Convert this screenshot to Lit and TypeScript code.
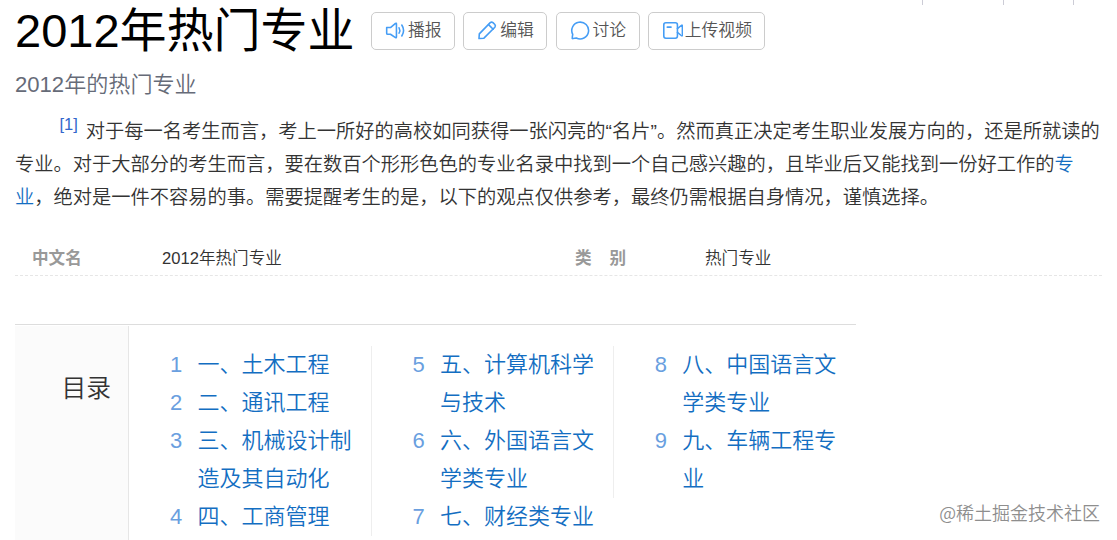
import { LitElement, html, css, svg } from 'lit'
import { customElement, property } from 'lit/decorators.js'

const icons = {
  sound: svg`
    <path d="M2 7.2h3.2L10 3.2q.9-.4.9.5v12.6q0 .9-.9.5L5.2 13.6H2.6Q1.6 13.6 1.6 12.6V7.2" />
    <path d="M13.4 7.4q1.5 2.6 0 5.2" />
    <path d="M16 4.8q3.4 5.2 0 10.4" />`,
  edit: svg`
    <path d="M2.2 13.2 12.6 2.5q1.3-1 2.6 0l1.8 1.8q1 1.3 0 2.6L6.6 17.3l-4.7.4z" />
    <path d="m11 4.4 4.4 4.4" />`,
  chat: svg`
    <path d="M2.9 17.7Q1.9 17.8 2.1 16.8l.5-3.1A8 8 0 1 1 6 17.1z" />`,
  video: svg`
    <rect x="1.7" y="2.7" width="13" height="14.6" rx="2" />
    <path d="M5 6.8h3.6" />
    <path d="M14.7 8.2 18.6 5q.8-.3.8.5v9q0 .8-.8.5l-3.9-3.2" />`,
}

interface Chapter {
  index: number
  lines: string[]
}

const columns: Chapter[][] = [
  [
    { index: 1, lines: ['一、土木工程'] },
    { index: 2, lines: ['二、通讯工程'] },
    { index: 3, lines: ['三、机械设计制', '造及其自动化'] },
    { index: 4, lines: ['四、工商管理'] },
  ],
  [
    { index: 5, lines: ['五、计算机科学', '与技术'] },
    { index: 6, lines: ['六、外国语言文', '学类专业'] },
    { index: 7, lines: ['七、财经类专业'] },
  ],
  [
    { index: 8, lines: ['八、中国语言文', '学类专业'] },
    { index: 9, lines: ['九、车辆工程专', '业'] },
  ],
]

@customElement('lemma-action')
export class LemmaAction extends LitElement {
  @property() icon: keyof typeof icons = 'sound'
  @property() text = ''

  render() {
    return html`<button class="action">
      <svg class="icon" viewBox="0 0 20 20">${icons[this.icon]}</svg>
      <span>${this.text}</span>
    </button>`
  }

  static styles = css`
    :host {
      display: block;
    }

    .action {
      appearance: none;
      box-sizing: border-box;
      display: flex;
      align-items: center;
      gap: 2px;
      height: 38px;
      margin: 0;
      padding: 0 12.4px 0 13px;
      background: #fff;
      border: 1px solid #ccc;
      border-radius: 5px;
      color: #555;
      font: inherit;
      font-size: 16.8px;
      line-height: 36px;
      white-space: nowrap;
      cursor: pointer;
    }

    .icon {
      width: 21px;
      height: 21px;
      margin-bottom: 2px;
      fill: none;
      stroke: #459df5;
      stroke-width: 1.5;
      stroke-linecap: round;
      stroke-linejoin: round;
    }
  `
}

@customElement('lemma-catalog')
export class LemmaCatalog extends LitElement {
  renderChapter(chapter: Chapter) {
    return html`<li class="chapter">
      <span class="index">${chapter.index}</span>
      <a class="link">${chapter.lines.map((line) => html`<span class="line">${line}</span>`)}</a>
    </li>`
  }

  render() {
    return html`<nav class="catalog">
      <h2 class="heading">目录</h2>
      <div class="columns">
        ${columns.map(
          (chapters) => html`<ol class="column">
            ${chapters.map((chapter) => this.renderChapter(chapter))}
          </ol>`
        )}
      </div>
    </nav>`
  }

  static styles = css`
    :host {
      display: block;
    }

    .catalog {
      display: flex;
      box-sizing: border-box;
      width: 841px;
      height: 240px;
      padding-top: 1px;
      border-top: 1px solid #ddd;
    }

    .heading {
      box-sizing: border-box;
      width: 114px;
      margin: 0;
      padding: 45px 17px 0 0;
      background: #fbfbfb;
      border-right: 1px solid #e6e6e6;
      color: #333;
      font-size: 24.75px;
      font-weight: inherit;
      line-height: 36px;
      text-align: right;
    }

    .columns {
      display: flex;
      align-items: flex-start;
      padding-top: 20px;
    }

    .column {
      box-sizing: border-box;
      width: 242.2px;
      margin: 0;
      padding: 0 0 0 40.4px;
      border-left: 1px solid #eee;
      list-style: none;
      font-size: 22px;
      line-height: 38px;
    }

    .column:first-child {
      padding-left: 41px;
      border-left: none;
    }

    .chapter {
      display: flex;
      white-space: nowrap;
    }

    .index {
      width: 27.4px;
      color: #6a9fdf;
    }

    .link {
      color: #136ec2;
    }

    .line {
      display: block;
    }
  `
}

@customElement('app-root')
export class AppRoot extends LitElement {
  render() {
    return html`
      <div class="toolbar">
        <span class="divider"></span>
        <span class="divider"></span>
        <span class="divider"></span>
      </div>
      <header class="header">
        <h1 class="title">2012年热门专业</h1>
        <div class="actions">
          <lemma-action icon="sound" text="播报"></lemma-action>
          <lemma-action icon="edit" text="编辑"></lemma-action>
          <lemma-action icon="chat" text="讨论"></lemma-action>
          <lemma-action icon="video" text="上传视频"></lemma-action>
        </div>
      </header>
      <div class="subtitle">2012年的热门专业</div>
      <p class="summary">
        <sup class="ref">[1]</sup>对于每一名考生而言，考上一所好的高校如同获得一张闪亮的“名片”。然而真正决定考生职业发展方向的，还是所就读的<br />专业。对于大部分的考生而言，要在数百个形形色色的专业名录中找到一个自己感兴趣的，且毕业后又能找到一份好工作的<a class="link">专<br />业</a>，绝对是一件不容易的事。需要提醒考生的是，以下的观点仅供参考，最终仍需根据自身情况，谨慎选择。
      </p>
      <dl class="info">
        <dt class="name">中文名</dt>
        <dd class="value">2012年热门专业</dd>
        <dt class="name"><span>类</span><span class="spaced">别</span></dt>
        <dd class="value">热门专业</dd>
      </dl>
      <lemma-catalog></lemma-catalog>
      <div class="watermark">@稀土掘金技术社区</div>
    `
  }

  static styles = css`
    :host {
      display: block;
      position: relative;
      box-sizing: border-box;
      width: 1117px;
      height: 540px;
      padding: 0 15px;
      overflow: hidden;
      background: #fff;
      color: #333;
      font-family: 'Liberation Sans', 'Noto Sans CJK SC', sans-serif;
      font-weight: 350;
      text-spacing-trim: space-all;
    }

    .toolbar {
      position: absolute;
      top: 0;
      left: 922px;
      display: grid;
      grid-template-columns: 81px 70px 1px;
      height: 5px;
    }

    .divider {
      width: 1px;
      background: #ccccd6;
    }

    .header {
      display: flex;
      align-items: flex-start;
      height: 68px;
    }

    .title {
      width: 356px;
      margin: 0;
      color: #000;
      font-size: 47px;
      font-weight: 400;
      line-height: 62px;
      white-space: nowrap;
    }

    .actions {
      display: flex;
      gap: 8.3px;
      padding-top: 12px;
    }

    .subtitle {
      height: 47px;
      color: #666b78;
      font-size: 22.1px;
      line-height: 33px;
    }

    .summary {
      margin: 0;
      font-size: 19.25px;
      line-height: 33px;
      text-indent: 38.5px;
      white-space: nowrap;
    }

    .ref {
      margin: 0 8px 0 6px;
      color: #3366cc;
      font-size: 16.5px;
      line-height: 0;
      vertical-align: 8px;
    }

    .summary .link {
      color: #136ec2;
    }

    .info {
      display: grid;
      grid-template-columns: 130px 413px 130px 1fr;
      box-sizing: border-box;
      height: 35px;
      margin: 27px 0 48px;
      padding-left: 17px;
      border-bottom: 1px dashed #e6e6e6;
      font-size: 16.6px;
      line-height: 36px;
    }

    .name {
      color: #999;
      font-weight: 700;
    }

    .spaced {
      margin-left: 18px;
    }

    .value {
      margin: 0;
    }

    .watermark {
      position: absolute;
      right: 17px;
      bottom: 15px;
      color: #8e8e8e;
      font-family: 'Noto Sans CJK SC', sans-serif;
      font-size: 18px;
      line-height: 26px;
    }
  `
}
